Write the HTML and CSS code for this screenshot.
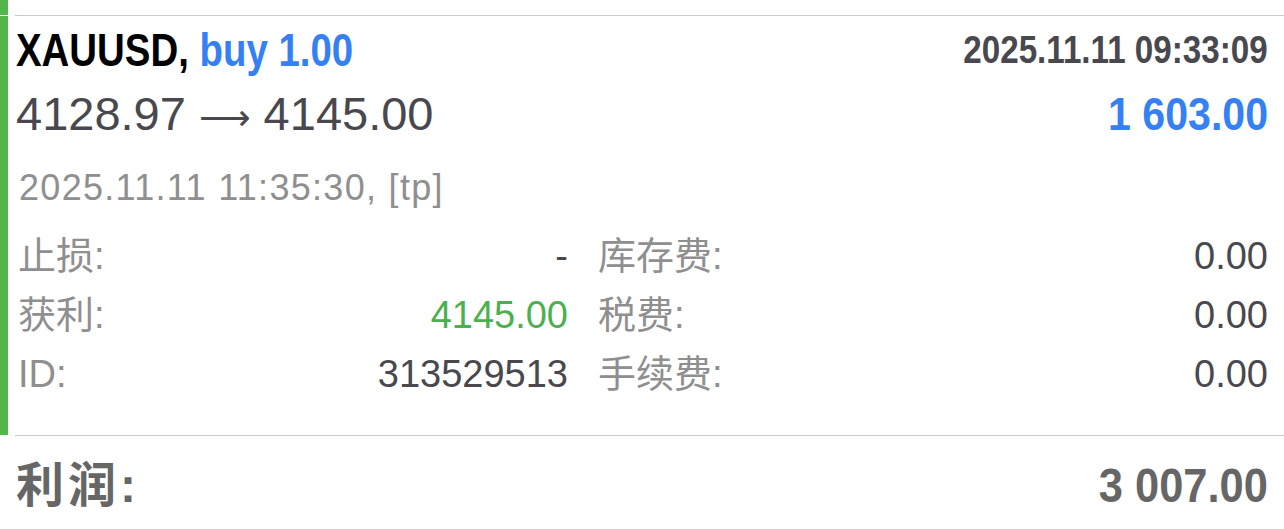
FILE: index.html
```html
<!DOCTYPE html>
<html lang="zh">
<head>
  <meta charset="UTF-8">
  <meta name="viewport" content="width=device-width, initial-scale=1.0">
  <title>History</title>
  <link rel="stylesheet" href="styles.css">
</head>
<body>
  <div class="deal deal-cut"></div>
  <div class="divider"></div>
  <div class="deal">
    <div class="deal-head">
      <div class="symbol"><span class="sym-name">XAUUSD,</span> <span class="sym-type">buy 1.00</span></div>
      <div class="open-time">2025.11.11 09:33:09</div>
    </div>
    <div class="deal-price">
      <div class="prices">4128.97 <span class="arrow">⟶</span> 4145.00</div>
      <div class="deal-profit">1 603.00</div>
    </div>
    <div class="close-time">2025.11.11 11:35:30, [tp]</div>
    <div class="deal-info">
      <div class="info-cell"><span class="info-label">止损:</span><span class="info-value">-</span></div>
      <div class="info-cell"><span class="info-label">库存费:</span><span class="info-value">0.00</span></div>
      <div class="info-cell"><span class="info-label">获利:</span><span class="info-value green">4145.00</span></div>
      <div class="info-cell"><span class="info-label">税费:</span><span class="info-value">0.00</span></div>
      <div class="info-cell"><span class="info-label">ID:</span><span class="info-value">313529513</span></div>
      <div class="info-cell"><span class="info-label">手续费:</span><span class="info-value">0.00</span></div>
    </div>
  </div>
  <div class="divider"></div>
  <div class="summary">
    <div class="summary-row"><span class="summary-label">利润:</span><span class="summary-value">3 007.00</span></div>
    <div class="summary-row"><span class="summary-label">信用:</span><span class="summary-value">0.00</span></div>
  </div>
</body>
</html>
```

FILE: styles.css
```css
body {
  margin: 0;
  background: #fff;
  color: #48484e;
  font-family: "Liberation Sans", Arial, "Noto Sans CJK SC", sans-serif;
  height: 529px;
  overflow: hidden;
}
.deal {
  border-left: 8px solid #52b64a;
  padding: 4px 16px 31px 8px;
}
.deal-cut {
  height: 15px;
  padding: 0;
}
.divider {
  height: 1px;
  margin-left: 15px;
  background: #cbcbcb;
}
.deal-head {
  display: flex;
  justify-content: space-between;
  align-items: flex-start;
  height: 60px;
}
.symbol {
  display: inline-block;
  font-size: 47px;
  line-height: 60px;
  font-weight: bold;
  white-space: nowrap;
  transform: scaleX(.817);
  transform-origin: left;
}
.sym-name {
  color: #000;
}
.sym-type {
  color: #3581f3;
}
.open-time {
  display: inline-block;
  font-size: 38px;
  line-height: 60px;
  font-weight: bold;
  color: #48484e;
  white-space: nowrap;
  transform: scaleX(.873);
  transform-origin: right;
}
.deal-price {
  display: flex;
  justify-content: space-between;
  align-items: baseline;
  height: 68px;
  font-size: 47px;
  line-height: 68px;
}
.prices {
  white-space: nowrap;
}
.arrow {
  font-family: "DejaVu Sans", sans-serif;
  font-size: 36px;
  line-height: 0;
}
.deal-profit {
  display: inline-block;
  font-size: 46px;
  font-weight: bold;
  color: #3581f3;
  transform: scaleX(.894);
  transform-origin: right;
}
.close-time {
  font-size: 36px;
  letter-spacing: 1.3px;
  line-height: 79px;
  color: #8f8f8f;
  padding-left: 3px;
}
.deal-info {
  display: grid;
  grid-template-columns: 552px 1fr;
  column-gap: 28px;
  font-size: 38px;
  line-height: 59px;
}
.info-cell {
  display: flex;
  justify-content: space-between;
}
.info-label {
  color: #8f8f8f;
  padding-left: 2px;
}
.info-value {
  color: #48484e;
}
.info-value.green {
  color: #4cb04f;
}
.summary {
  padding: 18px 16px 0 16px;
}
.summary-row {
  display: flex;
  justify-content: space-between;
  align-items: baseline;
  line-height: 64px;
  color: #666;
  font-weight: bold;
}
.summary-row + .summary-row {
  margin-top: 4px;
}
.summary-label {
  font-size: 48px;
  letter-spacing: 4px;
}
.summary-value {
  display: inline-block;
  font-size: 48px;
  transform: scaleX(.905);
  transform-origin: right;
}
```
